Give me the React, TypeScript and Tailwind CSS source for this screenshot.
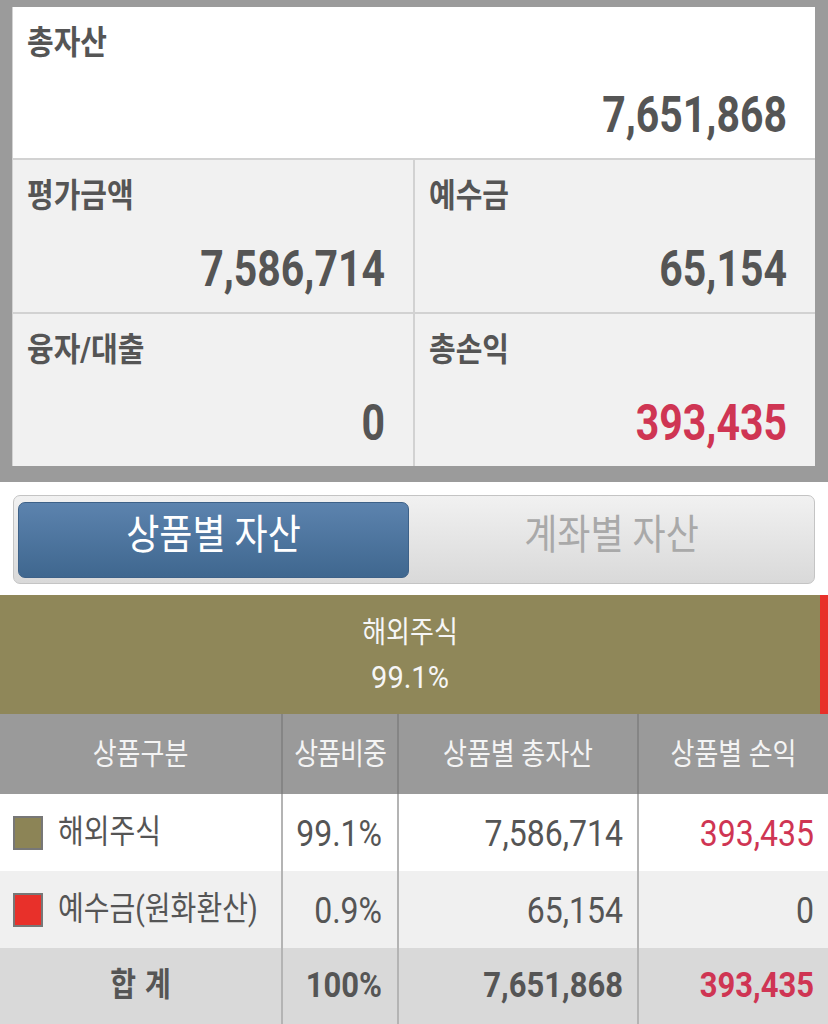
import React from "react";

const NUM = "inline-block scale-y-[1.15]";
const RED = "text-[#cf3553]";

function InfoCell({
  label,
  value,
  red = false,
  white = false,
}: {
  label: string;
  value: string;
  red?: boolean;
  white?: boolean;
}) {
  return (
    <div
      className={`${white ? "bg-white h-[151px]" : "bg-[#f1f1f1] h-[152px]"} flex flex-col justify-between pl-[14px] pr-[28px] pt-[18px] pb-[21px]`}
    >
      <div className="text-[29px] font-bold leading-[36px] text-[#555]">
        <span className="inline-block scale-y-[1.12]">{label}</span>
      </div>
      <div className={`text-right text-[41px] font-bold leading-[44px] ${red ? RED : "text-[#555]"}`}>
        <span className="inline-block scale-y-[1.24]">{value}</span>
      </div>
    </div>
  );
}

function Legend({ color }: { color: string }) {
  return <div className={`w-[30px] h-[34px] border-2 border-[#777] shrink-0 ${color}`} />;
}

type Row = {
  name: string;
  legend: string;
  pct: string;
  total: string;
  pl: string;
  plRed: boolean;
  bg: string;
};

const rows: Row[] = [
  { name: "해외주식", legend: "bg-[#8c8456]", pct: "99.1%", total: "7,586,714", pl: "393,435", plRed: true, bg: "bg-white" },
  { name: "예수금(원화환산)", legend: "bg-[#e8302a]", pct: "0.9%", total: "65,154", pl: "0", plRed: false, bg: "bg-[#f0f0f0]" },
];

const HEAD = "h-[80px] bg-[#9a9a9a] flex items-center justify-center text-[26px] text-[#f4f4f4]";
const HKO = "inline-block scale-y-[1.15]";

export default function App() {
  return (
    <div className="w-[828px] h-[1024px] overflow-hidden bg-white font-[Roboto,'Noto_Sans_CJK_KR',sans-serif] text-[#555]">
      {/* Summary */}
      <div className="bg-[#9b9b9b] pt-[7px] pl-[12px] pr-[13px] pb-[16px]">
        <div className="bg-[#d2d2d2] pl-[1px] flex flex-col gap-[2px]">
          <InfoCell label="총자산" value="7,651,868" white />
          <div className="grid grid-cols-2 gap-[2px]">
            <InfoCell label="평가금액" value="7,586,714" />
            <InfoCell label="예수금" value="65,154" />
            <InfoCell label="융자/대출" value="0" />
            <InfoCell label="총손익" value="393,435" red />
          </div>
        </div>
      </div>

      {/* Tabs */}
      <div className="px-[13px] pt-[13px] pb-[11px]">
        <div className="h-[89px] rounded-[7px] border border-[#c4c4c4] bg-gradient-to-b from-[#f1f1f1] to-[#d9d9d9] pl-[4px] pt-[6px] pb-[5px] flex">
          <div className="w-[391px] rounded-[7px] bg-gradient-to-b from-[#5c83ae] to-[#3f678f] border border-[#3d6188] flex items-center justify-center pb-[10px]">
            <span className="text-[36px] text-white leading-[40px] inline-block scale-y-[1.14]">상품별 자산</span>
          </div>
          <div className="flex-1 flex items-center justify-center pb-[10px]">
            <span className="text-[36px] text-[#a9a9a9] leading-[40px] inline-block scale-y-[1.14]">계좌별 자산</span>
          </div>
        </div>
      </div>

      {/* Ratio bar */}
      <div className="h-[119px] flex">
        <div className="flex-1 bg-[#8f8759] flex flex-col items-center justify-center text-[#f6f6f6] leading-[45px]">
          <span className="text-[26px] inline-block scale-y-[1.15]">해외주식</span>
          <span className="text-[29px] inline-block scale-y-[1.1]">99.1%</span>
        </div>
        <div className="w-[8px] bg-[#e8302a]" />
      </div>

      {/* Table */}
      <div className="grid grid-cols-[283px_116px_240px_1fr]">
        <div className={`${HEAD} border-r-2 border-[#858585]`}>
          <span className={HKO}>상품구분</span>
        </div>
        <div className={`${HEAD} border-r-2 border-[#858585]`}>
          <span className={`${HKO} tracking-[-1px]`}>상품비중</span>
        </div>
        <div className={`${HEAD} border-r-2 border-[#858585]`}>
          <span className={HKO}>상품별 총자산</span>
        </div>
        <div className={HEAD}>
          <span className={HKO}>상품별 손익</span>
        </div>

        {rows.map((r) => (
          <React.Fragment key={r.name}>
            <div className={`h-[77px] ${r.bg} border-r-2 border-[#b4b4b4] flex items-center pl-[13px] gap-[15px] text-[28px] text-[#555]`}>
              <Legend color={r.legend} />
              <span className="inline-block scale-y-[1.16]">{r.name}</span>
            </div>
            <div className={`h-[77px] ${r.bg} border-r-2 border-[#b4b4b4] flex items-center justify-end pr-[15px] text-[32px] text-[#555]`}>
              <span className={NUM}>{r.pct}</span>
            </div>
            <div className={`h-[77px] ${r.bg} border-r-2 border-[#b4b4b4] flex items-center justify-end pr-[14px] text-[32px] text-[#555]`}>
              <span className={NUM}>{r.total}</span>
            </div>
            <div className={`h-[77px] ${r.bg} flex items-center justify-end pr-[14px] text-[32px] ${r.plRed ? RED : "text-[#555]"}`}>
              <span className={NUM}>{r.pl}</span>
            </div>
          </React.Fragment>
        ))}

        <div className="h-[76px] bg-[#d9d9d9] border-r-2 border-[#b4b4b4] flex items-center justify-center text-[28px] font-bold text-[#555]">
          <span className="inline-block scale-y-[1.16] [word-spacing:2px]">합 계</span>
        </div>
        <div className="h-[76px] bg-[#d9d9d9] border-r-2 border-[#b4b4b4] flex items-center justify-end pr-[15px] text-[31px] font-bold text-[#555]">
          <span className={NUM}>100%</span>
        </div>
        <div className="h-[76px] bg-[#d9d9d9] border-r-2 border-[#b4b4b4] flex items-center justify-end pr-[14px] text-[31px] font-bold text-[#555]">
          <span className={NUM}>7,651,868</span>
        </div>
        <div className="h-[76px] bg-[#d9d9d9] flex items-center justify-end pr-[14px] text-[31px] font-bold text-[#cf3553]">
          <span className={NUM}>393,435</span>
        </div>
      </div>
    </div>
  );
}
